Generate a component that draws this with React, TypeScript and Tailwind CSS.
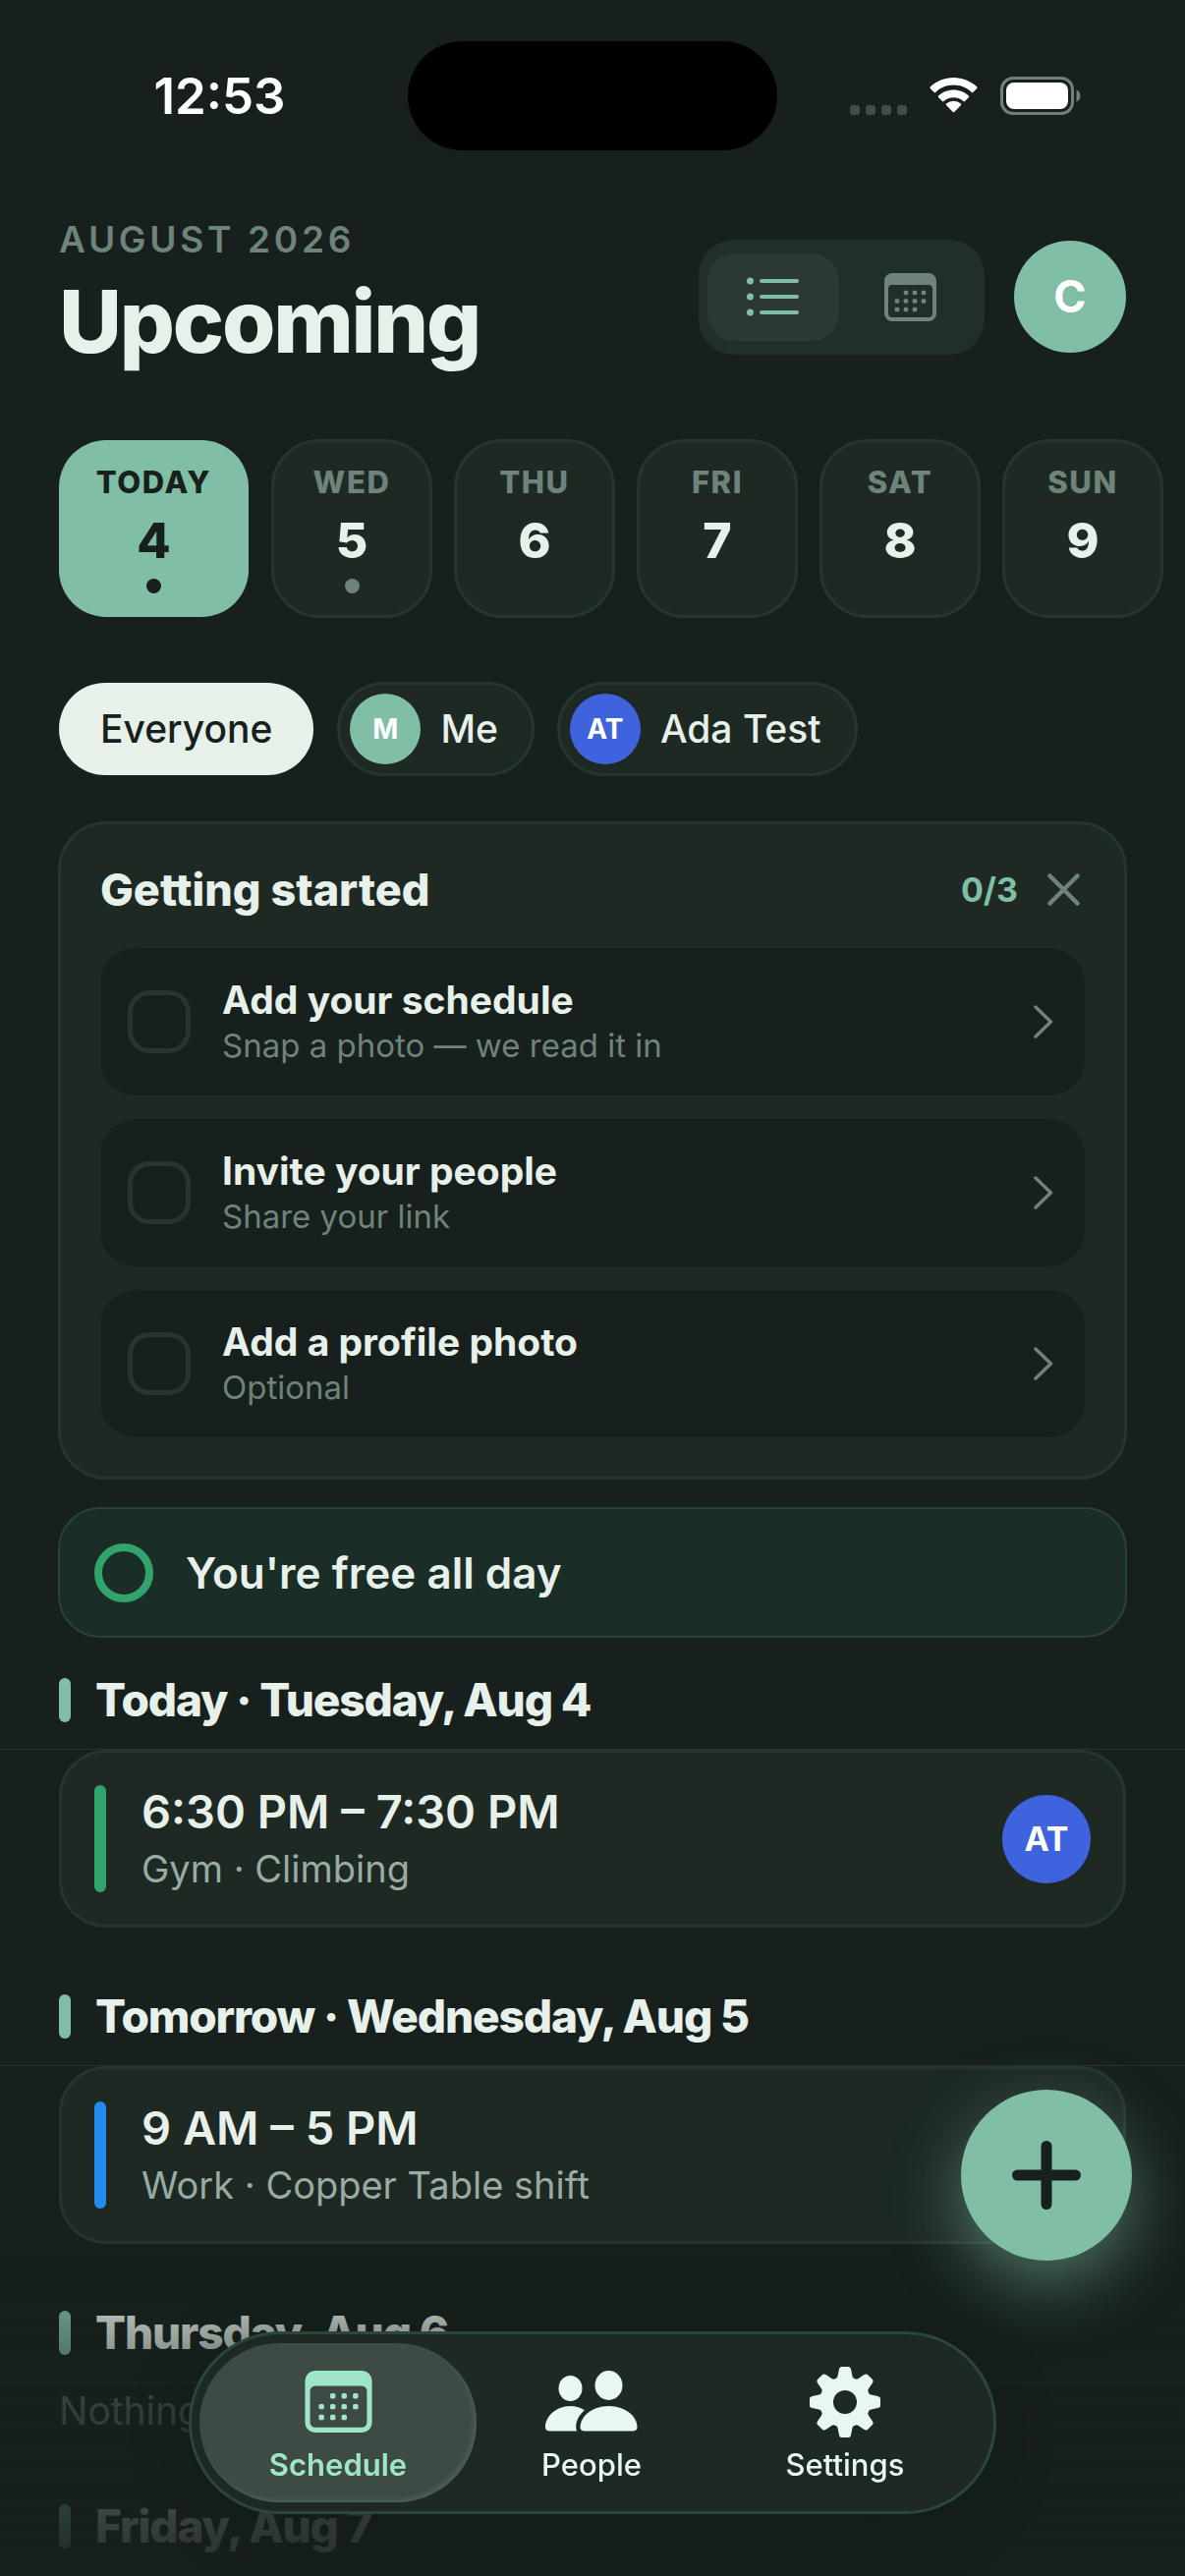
/**
 * Upcoming – mobile schedule screen.
 *
 * Header, day strip, people filter, onboarding checklist and a
 * day-by-day agenda. Tab bar and add button float above the list.
 */

import { useState } from "react";
import type { ReactNode } from "react";
import clsx from "clsx";

// ---------------------------------------------------------------------------
// Data
// ---------------------------------------------------------------------------

const DAYS = [
  { label: "TODAY", day: 4, busy: true },
  { label: "WED", day: 5, busy: true },
  { label: "THU", day: 6, busy: false },
  { label: "FRI", day: 7, busy: false },
  { label: "SAT", day: 8, busy: false },
  { label: "SUN", day: 9, busy: false },
];

const STEPS = [
  { id: "schedule", title: "Add your schedule", hint: "Snap a photo — we read it in" },
  { id: "invite", title: "Invite your people", hint: "Share your link" },
  { id: "photo", title: "Add a profile photo", hint: "Optional" },
];

// ---------------------------------------------------------------------------
// Icons
// ---------------------------------------------------------------------------

function WifiIcon() {
  return (
    <svg width="51" height="37" viewBox="0 0 51 37" fill="#fff" aria-hidden="true">
      <path d="M25.5 7.6c7.1 0 13.6 2.8 18.4 7.3.4.4 1 .4 1.4 0l4-4c.4-.4.4-1.1 0-1.5C43 3.6 34.7 0 25.5 0S8 3.6 1.7 9.4c-.4.4-.4 1.1 0 1.5l4 4c.4.4 1 .4 1.4 0 4.800-4.500 11.300-7.300 18.400-7.300Z" />
      <path d="M25.500 20.300c3.900 0 7.400 1.400 10.100 3.800.4.4 1 .4 1.400 0l4-4c.4-.4.4-1.100 0-1.500-4.100-3.800-9.500-6.100-15.500-6.100s-11.400 2.300-15.500 6.100c-.4.4-.4 1.100 0 1.500l4 4c.4.4 1 .4 1.400 0 2.700-2.400 6.200-3.800 10.100-3.800Z" />
      <path d="M33 28c.4-.4.4-1 0-1.400a11.500 11.500 0 0 0-15 0c-.4.4-.4 1 0 1.400l6.800 6.900c.4.4 1 .4 1.400 0L33 28Z" />
    </svg>
  );
}

function BatteryIcon() {
  return (
    <svg width="82" height="39" viewBox="0 0 82 39" aria-hidden="true">
      <rect x="1.5" y="1.5" width="72" height="36" rx="11.5" fill="none" stroke="#6e827a" strokeWidth="3" />
      <rect x="6" y="6" width="63" height="27" rx="8" fill="#fff" />
      <path d="M77.5 13.5c3 1.200 4 3.600 4 6s-1 4.800-4 6v-12Z" fill="#6e827a" />
    </svg>
  );
}

function ListIcon() {
  return (
    <svg width="54" height="40" viewBox="0 0 54 40" fill="currentColor" aria-hidden="true">
      {[4, 20, 36].map((y) => (
        <g key={y}>
          <circle cx="3.5" cy={y} r="3.5" />
          <rect x="13" y={y - 2} width="40" height="4" rx="2" />
        </g>
      ))}
    </svg>
  );
}

const CAL_DOTS = [
  [22, 20], [31, 20], [40, 20],
  [13, 28.5], [22, 28.5], [31, 28.5], [40, 28.5],
  [13, 37], [22, 37], [31, 37],
];

function CalendarIcon({ className, heavy }: { className: string; heavy?: boolean }) {
  const s = heavy ? 4.2 : 4.6;
  return (
    <svg className={className} viewBox="0 0 53 49" fill="currentColor" aria-hidden="true">
      <path
        fillRule="evenodd"
        d="M8 0h37a8 8 0 0 1 8 8v33a8 8 0 0 1-8 8H8a8 8 0 0 1-8-8V8a8 8 0 0 1 8-8Zm0 12a4 4 0 0 0-4 4v25a4 4 0 0 0 4 4h37a4 4 0 0 0 4-4V16a4 4 0 0 0-4-4H8Z"
      />
      {CAL_DOTS.map(([x, y]) => (
        <rect key={`${x}-${y}`} x={x - s / 2} y={y - s / 2} width={s} height={s} rx="1.2" />
      ))}
    </svg>
  );
}

function PeopleIcon() {
  return (
    <svg width="94" height="63" viewBox="0 0 94 63" fill="currentColor" aria-hidden="true">
      <ellipse cx="25.5" cy="18" rx="12" ry="13" />
      <path d="M4.5 61.5c-2.7 0-4.5-1.3-4.5-4C0 47.5 10 36 25.5 36c5.700 0 10.600 1.600 14.500 4.300-5.600 4.500-8.700 10.700-8.700 16.700 0 1.700.2 3.200.9 4.500H4.500Z" />
      <ellipse cx="64.5" cy="15" rx="14" ry="15" />
      <path d="M40 61.5c-2.7 0-4.5-1.3-4.5-4C35.5 47.5 46.5 36 64.5 36s29 11.500 29 21.500c0 2.700-1.800 4-4.500 4H40Z" />
    </svg>
  );
}

function GearIcon() {
  return (
    <svg width="72" height="72" viewBox="0 0 72 72" fill="currentColor" aria-hidden="true">
      <defs>
        <mask id="gear-hole">
          <rect width="72" height="72" fill="#fff" />
          <circle cx="36" cy="36" r="12" fill="#000" />
        </mask>
      </defs>
      <g mask="url(#gear-hole)">
        <circle cx="36" cy="36" r="25.5" />
        {[0, 45, 90, 135, 180, 225, 270, 315].map((a) => (
          <path
            key={a}
            transform={`rotate(${a} 36 36)`}
            d="M25.5 12.5c2-.6 2.800-1.600 3.100-3.200l1.300-6.500C30.300.9 31.200 0 32.800 0h6.400c1.600 0 2.500.9 2.900 2.800l1.300 6.500c.3 1.600 1.100 2.600 3.100 3.200L36 28Z"
          />
        ))}
      </g>
    </svg>
  );
}

function ChevronIcon() {
  return (
    <svg width="20" height="34" viewBox="0 0 20 34" fill="none" aria-hidden="true">
      <path d="M2 2l15.5 15L2 32" stroke="#6e837a" strokeWidth="3.5" strokeLinecap="round" strokeLinejoin="round" />
    </svg>
  );
}

// ---------------------------------------------------------------------------
// Agenda pieces
// ---------------------------------------------------------------------------

function DaySection({ title, children }: { title: string; children?: ReactNode }) {
  return (
    <section>
      <header className="flex h-[101px] items-center gap-[25px] border-b border-[#25332d] px-[60px]">
        <span className="h-[45px] w-3 rounded-full bg-[#80bfa5]" />
        <h2 className="text-[46px] font-extrabold leading-[56px] tracking-tight">{title}</h2>
      </header>
      {children}
    </section>
  );
}

interface EventCardProps {
  time: string;
  detail: string;
  kind: "gym" | "work";
  initials?: string;
}

function EventCard({ time, detail, kind, initials }: EventCardProps) {
  return (
    <article className="mx-[60px] mb-10 flex h-[181px] items-center rounded-[48px] border-[3px] border-[#26352f] bg-[#1e2924] px-[33px]">
      <span
        className={clsx(
          "h-[109px] w-3 rounded-full",
          kind === "gym" ? "bg-[#30a46c]" : "bg-[#228bf0]",
        )}
      />
      <div className="ml-9 flex-1 pt-0.5">
        <p className="text-[47px] font-semibold leading-[58px]">{time}</p>
        <p className="text-[38px] leading-[58px] text-[#9aaba2]">{detail}</p>
      </div>
      {initials && (
        <span className="flex size-[90px] items-center justify-center rounded-full bg-[#3e63dd] text-[34px] font-bold text-white">
          {initials}
        </span>
      )}
    </article>
  );
}

// ---------------------------------------------------------------------------
// Screen
// ---------------------------------------------------------------------------

export default function App() {
  const [done, setDone] = useState<string[]>([]);

  const toggle = (id: string) =>
    setDone((prev) => (prev.includes(id) ? prev.filter((d) => d !== id) : [...prev, id]));

  return (
    <div className="min-h-screen overflow-x-clip bg-[#17201c] font-[family-name:Inter,sans-serif] text-[#e8f0ea]">
      {/* Status bar */}
      <div className="grid grid-cols-[1fr_376px_1fr] items-center pb-[68px] pt-[42px]">
        <span className="pl-8 text-center text-[51px] font-semibold leading-[60px] text-white">12:53</span>
        <span className="h-[111px] rounded-full bg-black" />
        <span className="flex items-center justify-end pr-[106px]">
          <span className="mr-[22px] mt-7 flex gap-1.5">
            {[0, 1, 2, 3].map((i) => (
              <span key={i} className="size-2.5 rounded-[3px] bg-[#3f4e47]" />
            ))}
          </span>
          <WifiIcon />
          <span className="ml-[22px]">
            <BatteryIcon />
          </span>
        </span>
      </div>

      {/* Title row */}
      <header className="flex items-center px-[60px]">
        <div className="flex-1">
          <p className="text-[37px] font-semibold leading-[46px] tracking-widest text-[#6e837a]">AUGUST 2026</p>
          <h1 className="mt-1 text-[88px] font-extrabold leading-[112px] tracking-tight">Upcoming</h1>
        </div>
        <div className="flex h-[117px] items-center rounded-[36px] bg-[#212f29] pl-[9px] pr-[3px]">
          <button aria-label="List view" className="flex h-[89px] w-[134px] items-center justify-center rounded-[27px] bg-[#2c3933] text-[#80bfa5]">
            <ListIcon />
          </button>
          <button aria-label="Calendar view" className="flex h-[89px] w-[145px] items-center justify-center text-[#6e837a]">
            <CalendarIcon className="h-[49px] w-[53px]" />
          </button>
        </div>
        <button className="ml-[30px] size-[114px] rounded-full bg-[#80bfa5] text-[45px] font-bold text-white">C</button>
      </header>

      {/* Day strip */}
      <div className="mt-[65px] flex gap-6 pl-[60px]">
        {DAYS.map(({ label, day, busy }) => {
          const today = label === "TODAY";
          return (
            <button
              key={label}
              className={clsx(
                "flex h-[180px] shrink-0 flex-col items-center rounded-[48px] pt-6",
                today
                  ? "w-[193px] bg-[#80bfa5] text-[#17201c]"
                  : "w-[162px] bg-[#1e2924] outline-3 -outline-offset-2 outline-[#26352f]",
              )}
            >
              <span className={clsx("text-[31px] font-extrabold leading-[38px] tracking-wider", !today && "text-[#6e837a]")}>
                {label}
              </span>
              <span className="mt-2.5 text-[50px] font-extrabold leading-[60px]">{day}</span>
              {busy && (
                <span className={clsx("mt-[9px] size-[15px] rounded-full", today ? "bg-[#17201c]" : "bg-[#6e837a]")} />
              )}
            </button>
          );
        })}
      </div>

      {/* People filter */}
      <div className="mt-[67px] flex gap-[25px] px-[60px] text-[39px] font-medium">
        <button className="h-[94px] rounded-full bg-[#e8f0ea] px-[42px] text-[#17201c]">Everyone</button>
        <button className="flex h-[94px] items-center gap-5 rounded-full bg-[#1e2924] pl-3 pr-9 outline-3 -outline-offset-2 outline-[#26352f]">
          <span className="flex size-[72px] items-center justify-center rounded-full bg-[#80bfa5] text-[28px] font-bold text-white">M</span>
          Me
        </button>
        <button className="flex h-[94px] items-center gap-5 rounded-full bg-[#1e2924] pl-3 pr-9 outline-3 -outline-offset-2 outline-[#26352f]">
          <span className="flex size-[72px] items-center justify-center rounded-full bg-[#3e63dd] text-[28px] font-bold text-white">AT</span>
          Ada Test
        </button>
      </div>

      {/* Onboarding checklist */}
      <section className="mx-[60px] mt-12 rounded-[48px] bg-[#1e2924] p-[42px] outline-3 -outline-offset-2 outline-[#26352f]">
        <div className="flex items-center">
          <h2 className="flex-1 text-[45px] font-extrabold leading-[53px]">Getting started</h2>
          <span className="text-[34px] font-bold text-[#80bfa5]">{done.length}/3</span>
          <button aria-label="Dismiss" className="ml-[30px] mr-[5px] text-[#6e837a]">
            <svg width="33" height="33" viewBox="0 0 33 33" stroke="currentColor" strokeWidth="4.5" strokeLinecap="round">
              <path d="M2.5 2.500l28 28M30.500 2.500l-28 28" />
            </svg>
          </button>
        </div>
        <div className="mt-[33px] flex flex-col gap-6">
          {STEPS.map(({ id, title, hint }) => (
            <label key={id} className="flex h-[150px] items-center rounded-[36px] bg-[#17201c] pl-7 pr-8">
              <input
                type="checkbox"
                checked={done.includes(id)}
                onChange={() => toggle(id)}
                className="size-16 appearance-none rounded-[22px] border-[5px] border-[#26352f] checked:bg-[#80bfa5]"
              />
              <span className="ml-8 flex-1">
                <span className="block text-[39px] font-bold leading-[47px]">{title}</span>
                <span className="block text-[33px] leading-[46px] text-[#6e837a]">{hint}</span>
              </span>
              <ChevronIcon />
            </label>
          ))}
        </div>
      </section>

      {/* Availability */}
      <div className="mx-[60px] mb-[14px] mt-[30px] flex h-[131px] items-center rounded-[42px] bg-[#1a2d26] pl-9 outline-2 -outline-offset-1 outline-[#28443a]">
        <span className="size-[60px] rounded-full border-8 border-[#30a46c]" />
        <p className="ml-[33px] text-[44px] font-semibold leading-[54px]">You're free all day</p>
      </div>

      {/* Agenda */}
      <DaySection title="Today · Tuesday, Aug 4">
        <EventCard time="6:30 PM – 7:30 PM" detail="Gym · Climbing" kind="gym" initials="AT" />
      </DaySection>
      <DaySection title="Tomorrow · Wednesday, Aug 5">
        <EventCard time="9 AM – 5 PM" detail="Work · Copper Table shift" kind="work" />
      </DaySection>
      <DaySection title="Thursday, Aug 6">
        <p className="mb-10 h-14 px-[60px] pt-1 text-[39px] leading-[50px] text-[#6e837a]">Nothing scheduled</p>
      </DaySection>
      <DaySection title="Friday, Aug 7" />

      {/* Scroll fade behind the tab bar */}
      <div className="pointer-events-none fixed inset-x-0 bottom-0 h-[330px] bg-[linear-gradient(to_bottom,transparent_0%,#17201c55_24%,#17201cb0_48%,#17201ccc_75%,#17201cf0_100%)]" />

      {/* Add button */}
      <button
        aria-label="Add event"
        className="fixed bottom-[321px] right-[54px] flex size-[174px] items-center justify-center rounded-full bg-[#80bfa5] text-[#17201c] shadow-[0_24px_66px_rgba(128,191,165,0.5)]"
      >
        <svg width="70" height="70" viewBox="0 0 70 70" stroke="currentColor" strokeWidth="11" strokeLinecap="round">
          <path d="M35 5.5v59M5.5 35h59" />
        </svg>
      </button>

      {/* Tab bar */}
      <div className="pointer-events-none fixed inset-x-0 bottom-[63px] flex justify-center">
        <nav className="pointer-events-auto flex h-[186px] items-center rounded-full border-[3px] border-[#2b463b] bg-[#1e2924] pl-2 pr-2.5 text-[31px] font-medium leading-9 text-[#e8f7ef] shadow-[0_12px_60px_rgba(10,20,16,0.3)]">
          <a href="#schedule" className="flex h-[162px] w-[282px] flex-col items-center rounded-full bg-[#3d4b44] pt-7 font-semibold text-[#9fe6c8] shadow-[inset_-3px_-3px_4px_#4a5f55]">
            <CalendarIcon className="h-[63px] w-[69px]" heavy />
            <span className="mt-[15px]">Schedule</span>
          </a>
          <a href="#people" className="flex h-[162px] w-[234px] flex-col items-center pt-7">
            <PeopleIcon />
            <span className="mt-[15px]">People</span>
          </a>
          <a href="#settings" className="flex h-[162px] w-[282px] flex-col items-center pt-6">
            <GearIcon />
            <span className="mt-2.5">Settings</span>
          </a>
        </nav>
      </div>
    </div>
  );
}
